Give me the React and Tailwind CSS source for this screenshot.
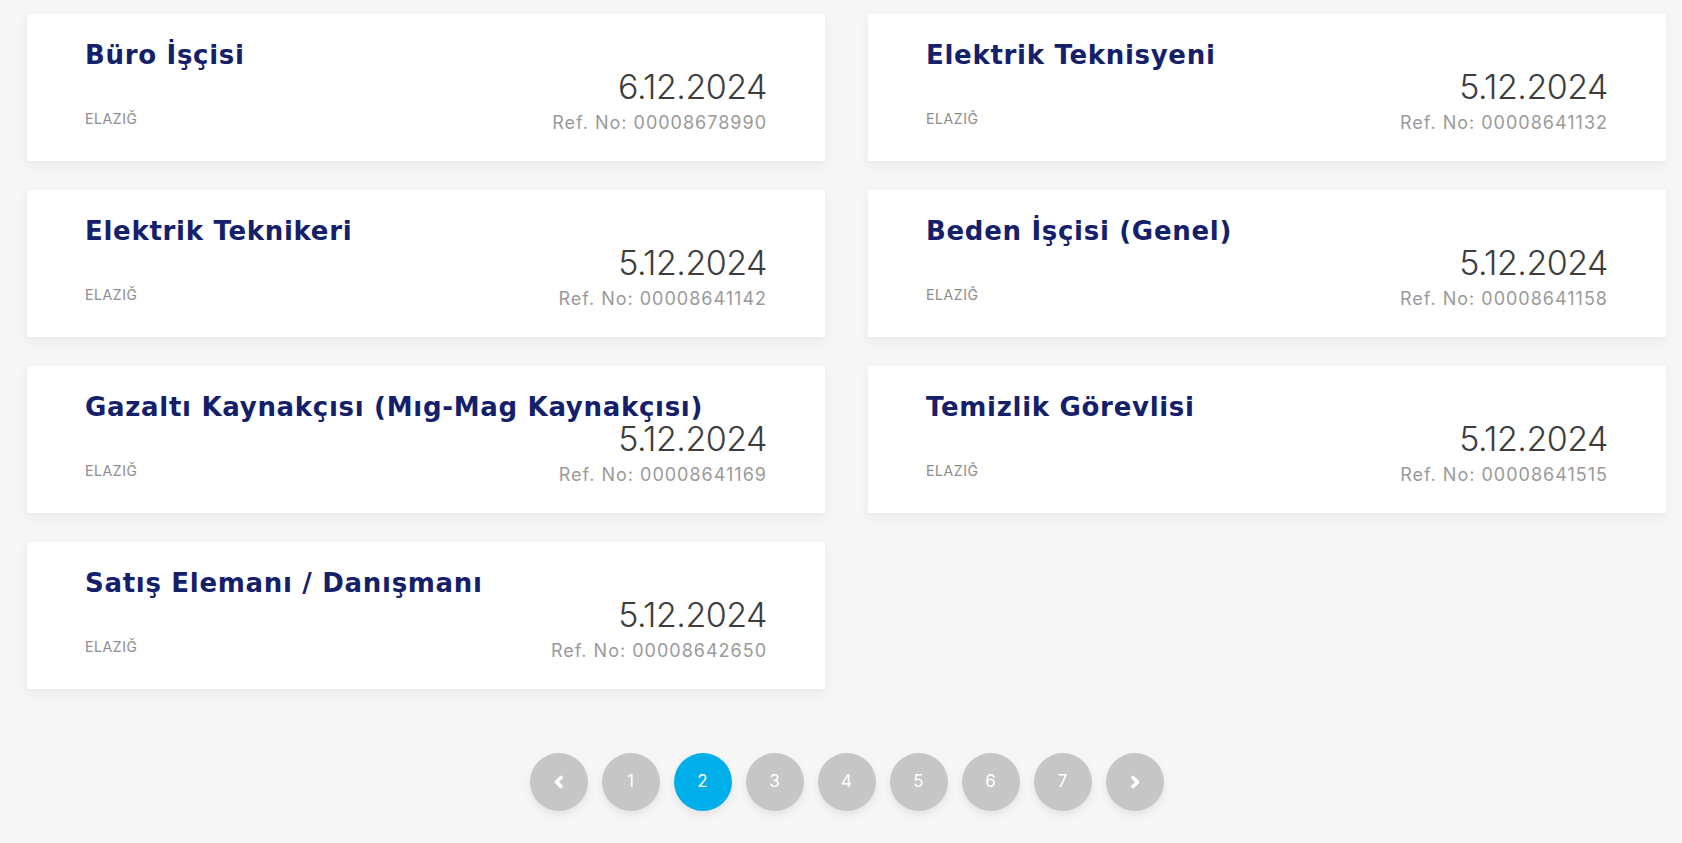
import React from 'react';

const jobs = [
    { title: 'Büro İşçisi', date: '6.12.2024', ref: '00008678990' },
    { title: 'Elektrik Teknisyeni', date: '5.12.2024', ref: '00008641132' },
    { title: 'Elektrik Teknikeri', date: '5.12.2024', ref: '00008641142' },
    { title: 'Beden İşçisi (Genel)', date: '5.12.2024', ref: '00008641158' },
    { title: 'Gazaltı Kaynakçısı (Mıg-Mag Kaynakçısı)', date: '5.12.2024', ref: '00008641169' },
    { title: 'Temizlik Görevlisi', date: '5.12.2024', ref: '00008641515' },
    { title: 'Satış Elemanı / Danışmanı', date: '5.12.2024', ref: '00008642650' },
];

function JobCard({ job }) {
    return (
        <div className="bg-white h-[147px] px-[58px] pt-[24px] shadow-[0_4px_10px_rgba(0,0,0,0.06)] flex flex-col">
            <h3
                className="mt-[2px] text-[26px] leading-[30px] font-bold text-[#15206a] tracking-[0.7px] whitespace-nowrap"
                style={{ fontFamily: '"DejaVu Sans", Inter, sans-serif' }}
            >
                {job.title}
            </h3>
            <div className="flex items-end justify-between">
                <span className="text-[14px] leading-[20px] text-[#8c8c8c] tracking-[0.6px] mb-[6px]">ELAZIĞ</span>
                <div className="text-right">
                    <div className="text-[34px] leading-[34px] font-light text-[#3d3d3d] tracking-[-0.5px]">{job.date}</div>
                    <div className="mt-[7px] text-[18px] leading-[24px] text-[#9a9a9a] tracking-[1px]">Ref. No: {job.ref}</div>
                </div>
            </div>
        </div>
    );
}

function PageButton({ children, active }) {
    return (
        <button
            className={
                'w-[58px] h-[58px] rounded-full flex items-center justify-center text-white text-[17px] shadow-[0_4px_8px_rgba(0,0,0,0.08)] ' +
                (active ? 'bg-[#00afea]' : 'bg-[#c6c6c6]')
            }
        >
            {children}
        </button>
    );
}

function Chevron({ dir }) {
    return (
        <svg width="14" height="14" viewBox="0 0 14 14">
            <path
                d={dir === 'left' ? 'M9 2.5 L4.5 7 L9 11.5' : 'M5 2.5 L9.5 7 L5 11.5'}
                fill="none"
                stroke="white"
                strokeWidth="3.6"
                strokeLinecap="round"
                strokeLinejoin="round"
            />
        </svg>
    );
}

export default function App() {
    return (
        <div className="min-h-[843px] bg-[#f6f6f6] pt-[14px] pl-[27px] pr-[16px]" style={{ fontFamily: 'Inter, "Noto Sans", sans-serif' }}>
            <div className="grid grid-cols-2 gap-x-[43px] gap-y-[29px]">
                {jobs.map((job) => (
                    <JobCard key={job.ref} job={job} />
                ))}
            </div>
            <div className="flex justify-center gap-[14px] mt-[64px]">
                <PageButton><Chevron dir="left" /></PageButton>
                {[1, 2, 3, 4, 5, 6, 7].map((n) => (
                    <PageButton key={n} active={n === 2}>{n}</PageButton>
                ))}
                <PageButton><Chevron dir="right" /></PageButton>
            </div>
        </div>
    );
}
